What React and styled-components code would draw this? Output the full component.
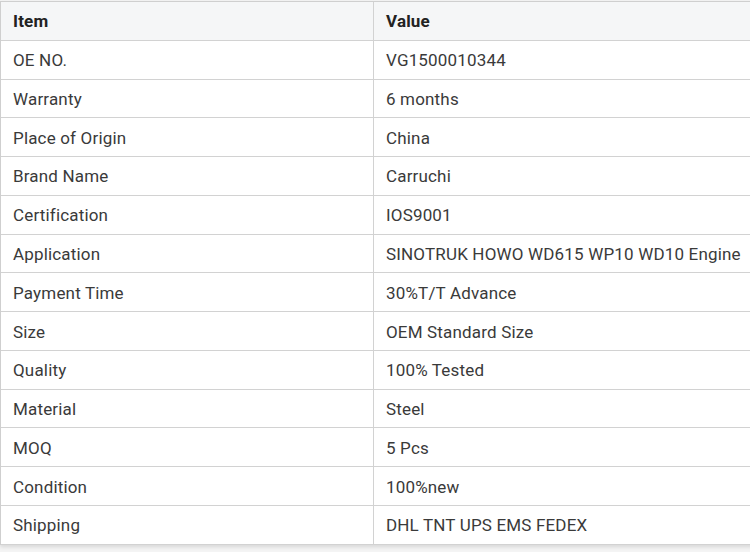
import React from 'react'
import styled, { createGlobalStyle } from 'styled-components'

const GlobalStyle = createGlobalStyle`
  html, body {
    margin: 0;
    padding: 0;
    background: #fff;
    overflow: hidden;
  }
  body {
    font-family: Roboto, "Liberation Sans", Arial, sans-serif;
  }
`

const Page = styled.div`
  width: 750px;
  height: 552px;
  overflow: hidden;
  padding-top: 1px;
  background: #f4f4f4;
`

const Table = styled.div`
  width: 770px;
  display: grid;
  grid-template-columns: 373px 1fr;
  grid-auto-rows: 38.77px;
  border-top: 1px solid #cfcfcf;
  border-left: 1px solid #cfcfcf;
  background: #fff;
  box-shadow: 0 2px 4px rgba(0, 0, 0, 0.12);
`

const Cell = styled.div`
  display: flex;
  align-items: center;
  padding: 1px 12px 0;
  box-sizing: border-box;
  border-bottom: 1px solid #d2d2d2;
  border-right: ${p => (p.$first ? '1px solid #d2d2d2' : 'none')};
  background: ${p => (p.$head ? '#f5f6f7' : '#fff')};
  color: ${p => (p.$head ? '#222' : '#3a3a3a')};
  font-size: 17px;
  letter-spacing: 0.17px;
  font-weight: ${p => (p.$head ? 700 : 400)};
  white-space: nowrap;
`

const rows = [
  ['OE NO.', 'VG1500010344'],
  ['Warranty', '6 months'],
  ['Place of Origin', 'China'],
  ['Brand Name', 'Carruchi'],
  ['Certification', 'IOS9001'],
  ['Application', 'SINOTRUK HOWO WD615 WP10 WD10 Engine'],
  ['Payment Time', '30%T/T Advance'],
  ['Size', 'OEM Standard Size'],
  ['Quality', '100% Tested'],
  ['Material', 'Steel'],
  ['MOQ', '5 Pcs'],
  ['Condition', '100%new'],
  ['Shipping', 'DHL TNT UPS EMS FEDEX'],
]

const App = () => {
  return (
    <Page>
      <GlobalStyle />
      <Table>
        <Cell $head $first>Item</Cell>
        <Cell $head>Value</Cell>
        {rows.map(([item, value]) => (
          <React.Fragment key={item}>
            <Cell $first>{item}</Cell>
            <Cell>{value}</Cell>
          </React.Fragment>
        ))}
      </Table>
    </Page>
  )
}

export default App
